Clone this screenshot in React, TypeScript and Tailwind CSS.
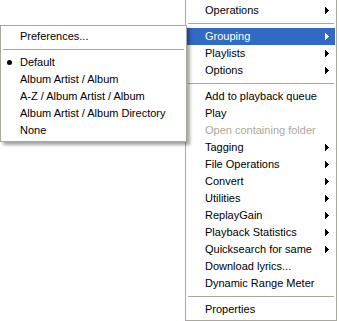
type Item =
  | { kind: 'sep' }
  | { kind: 'item'; label: string; sub?: boolean; active?: boolean; disabled?: boolean; bullet?: boolean };

const mainItems: Item[] = [
  { kind: 'item', label: 'Operations', sub: true },
  { kind: 'sep' },
  { kind: 'item', label: 'Grouping', sub: true, active: true },
  { kind: 'item', label: 'Playlists', sub: true },
  { kind: 'item', label: 'Options', sub: true },
  { kind: 'sep' },
  { kind: 'item', label: 'Add to playback queue' },
  { kind: 'item', label: 'Play' },
  { kind: 'item', label: 'Open containing folder', disabled: true },
  { kind: 'item', label: 'Tagging', sub: true },
  { kind: 'item', label: 'File Operations', sub: true },
  { kind: 'item', label: 'Convert', sub: true },
  { kind: 'item', label: 'Utilities', sub: true },
  { kind: 'item', label: 'ReplayGain', sub: true },
  { kind: 'item', label: 'Playback Statistics', sub: true },
  { kind: 'item', label: 'Quicksearch for same', sub: true },
  { kind: 'item', label: 'Download lyrics...' },
  { kind: 'item', label: 'Dynamic Range Meter' },
  { kind: 'sep' },
  { kind: 'item', label: 'Properties' },
];

const groupingItems: Item[] = [
  { kind: 'item', label: 'Preferences...' },
  { kind: 'sep' },
  { kind: 'item', label: 'Default', bullet: true },
  { kind: 'item', label: 'Album Artist / Album' },
  { kind: 'item', label: 'A-Z / Album Artist / Album' },
  { kind: 'item', label: 'Album Artist / Album Directory' },
  { kind: 'item', label: 'None' },
];

function Arrow({ white }: { white?: boolean }) {
  return (
    <svg width="4" height="7" viewBox="0 0 4 7" className="shrink-0">
      <path d="M0 0 L4 3.5 L0 7 Z" fill={white ? '#ffffff' : '#000000'} shapeRendering="crispEdges" />
    </svg>
  );
}

function MenuList({ items }: { items: Item[] }) {
  return (
    <>
      {items.map((it, i) =>
        it.kind === 'sep' ? (
          <div key={i} className="h-[9px] flex items-center px-[1px]">
            <div className="h-px w-full bg-[#aca899]" />
          </div>
        ) : (
          <div
            key={i}
            className={`relative h-[17px] flex items-center pl-[18px] pr-[6px] ${
              it.active ? 'bg-[#316ac5] text-white' : it.disabled ? 'text-[#aca899]' : 'text-black'
            }`}
          >
            {it.bullet && (
              <span className="absolute left-[5px] top-[6px] w-[5px] h-[5px] rounded-full bg-black" />
            )}
            <span className="flex-1 whitespace-nowrap leading-none">{it.label}</span>
            {it.sub && <Arrow white={it.active} />}
          </div>
        )
      )}
    </>
  );
}

export default function App() {
  return (
    <div
      className="relative w-[339px] h-[321px] bg-white overflow-hidden text-[11px]"
      style={{ fontFamily: '"Liberation Sans", Arial, sans-serif' }}
    >
      {/* Main context menu */}
      <div className="absolute left-[185px] top-[-1px] w-[152px] border border-[#aca899] bg-white py-[2px] px-[1px]">
        <MenuList items={mainItems} />
      </div>

      {/* Grouping submenu */}
      <div className="absolute left-0 top-[25px] w-[187px] border border-[#aca899] bg-white py-[2px] pl-[1px] pr-[1px] shadow-[3px_3px_3px_rgba(0,0,0,0.35)]">
        <MenuList items={groupingItems} />
      </div>
    </div>
  );
}
